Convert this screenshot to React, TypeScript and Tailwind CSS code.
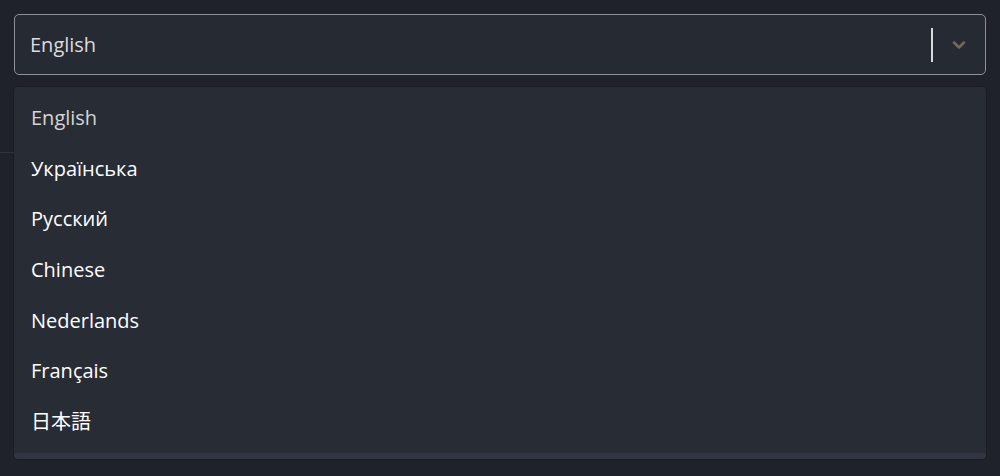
import { ChevronDown } from 'lucide-react';

const languages = ['English', 'Українська', 'Русский', 'Chinese', 'Nederlands', 'Français', '日本語'];

export default function App() {
  return (
    <div
      className="h-[476px] w-[1000px] overflow-hidden bg-[#1f222a] text-[20px]"
      style={{ fontFamily: '"Open Sans", "Noto Sans CJK JP", sans-serif' }}
    >
      <div className="flex flex-col">
        <div className="h-[14px]" />
        <div className="mx-[14px] flex h-[61px] items-center rounded-[5px] border border-[#8d9097] bg-[#262a33]">
          <span className="flex-1 pl-[15px] text-[#dcdcdc]">English</span>
          <div className="h-[34px] w-[2px] bg-[#d9d9dc]" />
          <div className="flex w-[52px] items-center justify-center">
            <ChevronDown size={20} strokeWidth={3} className="text-[#74695f]" />
          </div>
        </div>

        <div className="relative mt-[12px]">
          <div className="absolute left-0 top-[65px] h-px w-[14px] bg-[#30343d]" />
          <div className="mx-[14px] rounded-[4px] border-b-[6px] border-[#313541] bg-[#282c35] py-[6px] shadow-[0_0_0_1px_rgba(0,0,0,0.15)]">
            {languages.map((lang, i) => (
              <div
                key={lang}
                className={`flex h-[50.6px] items-center pl-[17px] ${i === 0 ? 'text-[#d6d6d6]' : 'text-white'}`}
              >
                {lang}
              </div>
            ))}
          </div>
        </div>
      </div>
    </div>
  );
}
